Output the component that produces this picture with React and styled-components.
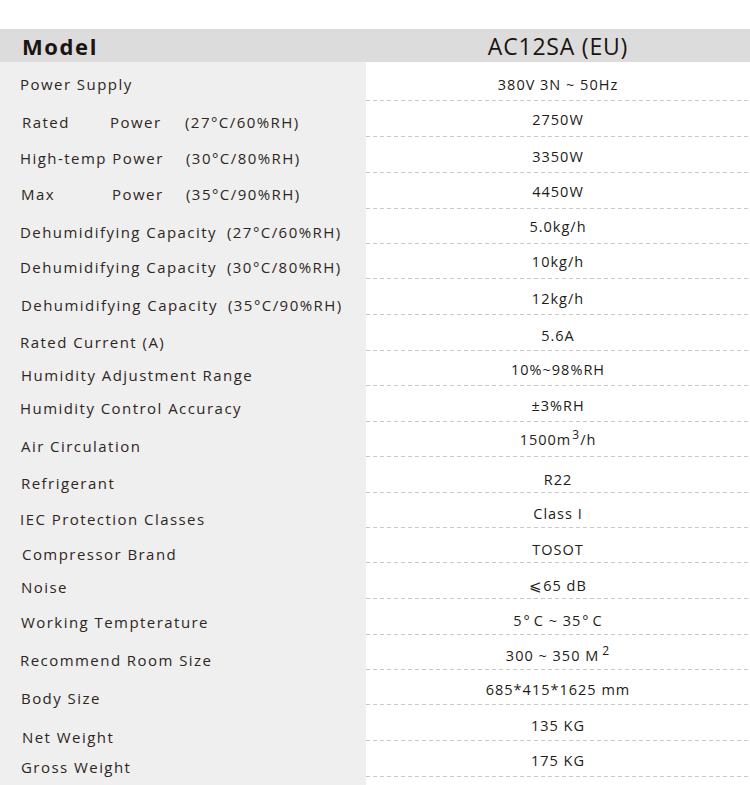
import React from 'react';
import styled, { createGlobalStyle } from 'styled-components';

const Global = createGlobalStyle`
  html, body { margin: 0; padding: 0; background: #ffffff; }
  body { width: 750px; height: 785px; overflow: hidden; }
`;

const Page = styled.div`
  width: 750px;
  height: 785px;
  padding-top: 29px;
  box-sizing: border-box;
  overflow: hidden;
  background: #ffffff;
`;

const Table = styled.div`
  display: grid;
  grid-template-columns: 366px 384px;
  background: linear-gradient(to right, #efefef 366px, #ffffff 366px);
`;

const HeadLabel = styled.div`
  height: 33px;
  background: #dcdcdc;
  display: flex;
  align-items: center;
  padding-left: 22px;
  font-family: "Open Sans", "Liberation Sans", sans-serif;
  font-weight: 700;
  font-size: 22px;
  letter-spacing: 1.6px;
  color: #1b1410;
`;

const HeadValue = styled.div`
  height: 33px;
  background: #dcdcdc;
  display: flex;
  align-items: center;
  justify-content: center;
  font-family: "Open Sans", "Liberation Sans", sans-serif;
  font-weight: 400;
  font-size: 23px;
  letter-spacing: 0.8px;
  color: #1b1410;
`;

const LabelCell = styled.div`
  height: ${p => p.$h}px;
  box-sizing: border-box;
  display: flex;
  align-items: center;
  padding-left: ${p => p.$x}px;
  padding-top: ${p => p.$dy * 2}px;
  font-family: "Open Sans", "Liberation Sans", sans-serif;
  font-size: 15px;
  letter-spacing: 1.45px;
  color: #2e2622;
  white-space: nowrap;
`;

const Part = styled.span`
  display: inline-block;
  width: ${p => (p.$w ? `${p.$w}px` : 'auto')};
`;

const Cond = styled.span`
  margin-left: ${p => p.$gap}px;
`;

const ValueCell = styled.div`
  height: ${p => p.$h}px;
  box-sizing: border-box;
  display: flex;
  align-items: center;
  justify-content: center;
  padding-top: ${p => p.$dy * 2}px;
  font-family: "Open Sans", "Liberation Sans", sans-serif;
  font-size: 14.5px;
  letter-spacing: 1px;
  font-weight: 500;
  color: #231c18;
  white-space: nowrap;
  background-image: linear-gradient(to right, #c8c8c8 4px, transparent 4px);
  background-size: 7px 1px;
  background-repeat: repeat-x;
  background-position: 0 100%;
`;

const Sup = styled.span`
  font-size: 12px;
  position: relative;
  top: -5px;
  margin-left: ${p => p.$gap || 0}px;
`;

const Deg = styled.span`
  margin: 0 3px 0 1px;
`;

const TailLeft = styled.div`
  height: 8px;
`;

const TailRight = styled.div`
  height: 8px;
`;

const rows = [
  { h: 39, x: 20, dy: 2, vdy: 2.5, label: 'Power Supply', value: '380V 3N ~ 50Hz' },
  {
    h: 36, x: 22, dy: 3, vdy: 0,
    label: (<><Part $w={88}>Rated</Part><Part $w={75}>Power</Part>(27°C/60%RH)</>),
    value: '2750W',
  },
  {
    h: 36, x: 20, dy: 3, vdy: 1,
    label: (<><Part $w={166}>High-temp Power</Part>(30°C/80%RH)</>),
    value: '3350W',
  },
  {
    h: 36, x: 21, dy: 3, vdy: 0,
    label: (<><Part $w={91}>Max</Part><Part $w={74}>Power</Part>(35°C/90%RH)</>),
    value: '4450W',
  },
  {
    h: 35, x: 20, dy: 5.5, vdy: 0,
    label: (<>Dehumidifying Capacity<Cond $gap={10}>(27°C/60%RH)</Cond></>),
    value: '5.0kg/h',
  },
  {
    h: 35, x: 20, dy: 5.5, vdy: 0,
    label: (<>Dehumidifying Capacity<Cond $gap={10}>(30°C/80%RH)</Cond></>),
    value: '10kg/h',
  },
  {
    h: 36, x: 21, dy: 7.5, vdy: 1,
    label: (<>Dehumidifying Capacity<Cond $gap={10}>(35°C/90%RH)</Cond></>),
    value: '12kg/h',
  },
  { h: 36, x: 20, dy: 9, vdy: 2, label: 'Rated Current (A)', value: '5.6A' },
  { h: 35, x: 21, dy: 6.5, vdy: 0.5, label: 'Humidity Adjustment Range', value: '10%~98%RH' },
  { h: 36, x: 20, dy: 4, vdy: 1, label: 'Humidity Control Accuracy', value: '±3%RH' },
  {
    h: 35, x: 21, dy: 6.5, vdy: -1, label: 'Air Circulation',
    value: (<>1500m<Sup $gap={1}>3</Sup>/h</>),
  },
  { h: 36, x: 21, dy: 8, vdy: 4, label: 'Refrigerant', value: 'R22' },
  { h: 35, x: 20, dy: 8.5, vdy: 3, label: 'IEC Protection Classes', value: 'Class I' },
  { h: 35, x: 22, dy: 8.5, vdy: 4, label: 'Compressor Brand', value: 'TOSOT' },
  { h: 36, x: 21, dy: 6, vdy: 4, label: 'Noise', value: '⩽65 dB' },
  {
    h: 36, x: 21, dy: 5, vdy: 3, label: 'Working Tempterature',
    value: (<>5<Deg>°</Deg>C ~ 35<Deg>°</Deg>C</>),
  },
  {
    h: 35, x: 20, dy: 7.5, vdy: 2.5, label: 'Recommend Room Size',
    value: (<>300 ~ 350 M<Sup $gap={3}>2</Sup></>),
  },
  { h: 35, x: 21, dy: 10.5, vdy: 1.5, label: 'Body Size', value: '685*415*1625 mm' },
  { h: 36, x: 22, dy: 13.5, vdy: 2, label: 'Net Weight', value: '135 KG' },
  { h: 36, x: 21, dy: 8, vdy: 1, label: 'Gross Weight', value: '175 KG' },
];

export default function App() {
  return (
    <Page>
      <Global />
      <Table>
        <HeadLabel>Model</HeadLabel>
        <HeadValue>AC12SA&nbsp;(EU)</HeadValue>
        {rows.map((r, i) => (
          <React.Fragment key={i}>
            <LabelCell $h={r.h} $x={r.x} $dy={r.dy}>{r.label}</LabelCell>
            <ValueCell $h={r.h} $dy={r.vdy}>{r.value}</ValueCell>
          </React.Fragment>
        ))}
        <TailLeft />
        <TailRight />
      </Table>
    </Page>
  );
}
